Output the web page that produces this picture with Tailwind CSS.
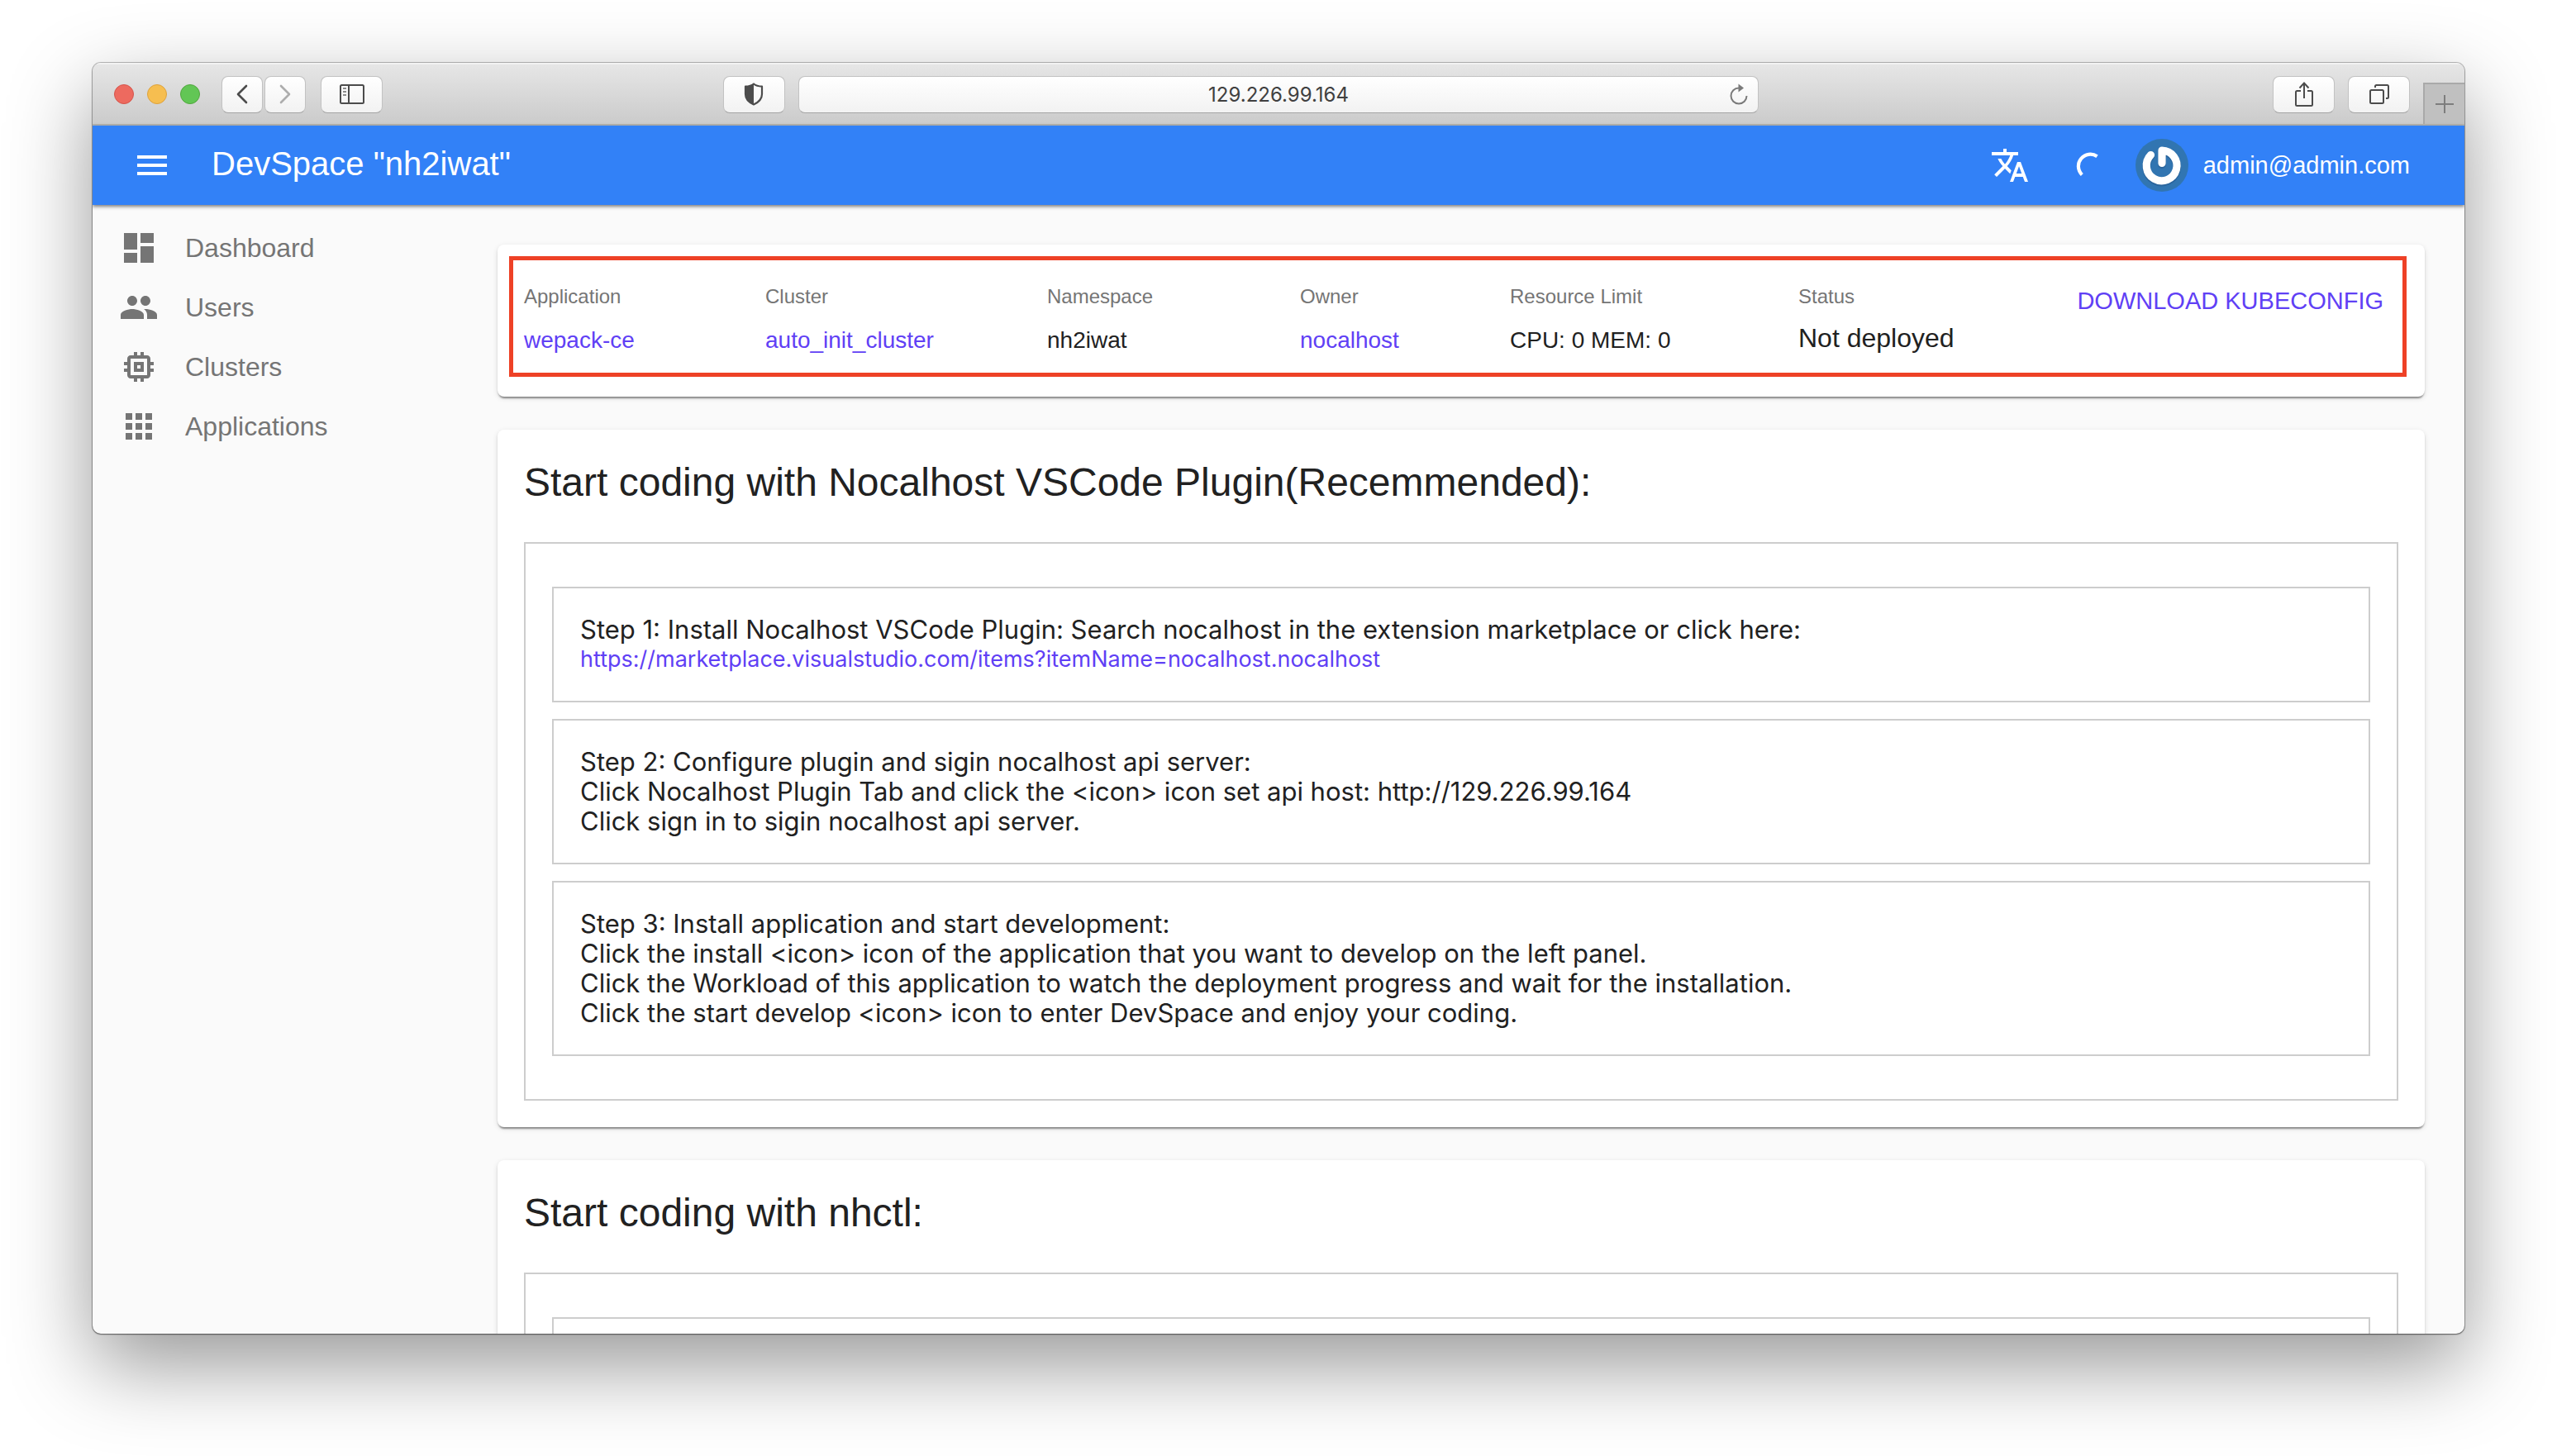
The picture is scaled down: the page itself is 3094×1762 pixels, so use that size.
<!DOCTYPE html>
<html lang="en">
<head>
<meta charset="utf-8">
<meta name="viewport" content="width=device-width, initial-scale=1">
<title>DevSpace "nh2iwat"</title>
<script src="https://cdn.jsdelivr.net/npm/@tailwindcss/browser@4"></script>
</head>
<body class="bg-white font-['Liberation_Sans',Arial,sans-serif] text-[#212121]">
<div class="h-screen px-28 pt-[76px] pb-[148px]">
  <!-- Browser window -->
  <div class="flex h-full flex-col overflow-hidden rounded-[10px] bg-[#fafafa] shadow-[0_0_0_1px_rgba(0,0,0,0.25),0_1px_2px_rgba(0,0,0,0.4),0_38px_100px_rgba(0,0,0,0.41)]">

    <!-- Toolbar -->
    <div class="grid h-[76px] shrink-0 grid-cols-[1fr_40.5%_1fr] items-center border-t-2 border-b-2 border-t-[#f2f2f2] border-b-[#b3b3b0] bg-linear-to-b from-[#e6e6e6] to-[#cbcbcb]">
      <div class="flex items-center pr-4 pl-[26px]">
        <div class="flex gap-4">
          <button aria-label="Close" class="size-6 rounded-full border border-[#d5544b] bg-[#ed6a5f]"></button>
          <button aria-label="Minimize" class="size-6 rounded-full border border-[#dda23d] bg-[#f6be50]"></button>
          <button aria-label="Zoom" class="size-6 rounded-full border border-[#51a73e] bg-[#62c655]"></button>
        </div>
        <div class="ml-[26px] flex gap-0.5">
          <button aria-label="Back" class="flex h-[45px] w-[50px] items-center justify-center rounded-lg border border-[#c2c2c2] border-b-[#a5a5a5] bg-linear-to-b from-white to-[#f2f2f2]">
            <svg class="h-6 w-4" viewBox="0 0 16 24" fill="none" stroke="#4c4c4c" stroke-width="2.6" stroke-linecap="round" stroke-linejoin="round"><path d="M13 2 3 12l10 10"/></svg>
          </button>
          <button aria-label="Forward" class="flex h-[45px] w-[50px] items-center justify-center rounded-lg border border-[#c2c2c2] border-b-[#a5a5a5] bg-linear-to-b from-white to-[#f2f2f2]">
            <svg class="h-6 w-4" viewBox="0 0 16 24" fill="none" stroke="#adadad" stroke-width="2.6" stroke-linecap="round" stroke-linejoin="round"><path d="m3 2 10 10L3 22"/></svg>
          </button>
        </div>
        <button aria-label="Sidebar" class="ml-[18px] flex h-[45px] w-[75px] items-center justify-center rounded-lg border border-[#c2c2c2] border-b-[#a5a5a5] bg-linear-to-b from-white to-[#f2f2f2]">
          <svg class="h-6 w-[30px]" viewBox="0 0 30 24" fill="none" stroke="#4c4c4c" stroke-width="2"><rect x="1" y="1" width="28" height="22" rx="1.5"/><path d="M11 1v22"/><path stroke="#8c8c8c" d="M4 5h4M4 9h4M4 13h4"/></svg>
        </button>
        <button aria-label="Privacy report" class="ml-auto flex h-[45px] w-[75px] items-center justify-center rounded-lg border border-[#c2c2c2] border-b-[#a5a5a5] bg-linear-to-b from-white to-[#f2f2f2]">
          <svg class="h-7 w-6" viewBox="0 0 24 28"><path d="M12 1.500C9.500 3.500 6 4.500 2 4.700V14c0 6 4.500 10 10 12.500C17.500 24 22 20 22 14V4.700C18 4.500 14.500 3.500 12 1.500z" fill="none" stroke="#4c4c4c" stroke-width="2.200" stroke-linejoin="round"/><path d="M12 1.500C9.500 3.500 6 4.500 2 4.700V14c0 6 4.500 10 10 12.500z" fill="#4c4c4c"/></svg>
        </button>
      </div>

      <div class="relative">
        <input aria-label="Address" type="text" value="129.226.99.164" class="block h-[45px] w-full rounded-lg border border-[#c2c2c2] border-b-[#a5a5a5] bg-linear-to-b from-white to-[#f2f2f2] text-center font-['Inter',sans-serif] text-2xl text-[#404040]">
        <button aria-label="Reload" class="absolute top-2 right-2.5">
          <svg class="size-7" viewBox="0 0 28 28" fill="none" stroke="#7a7a7a" stroke-width="2"><path d="M14 6.500A9.500 9.500 0 1 0 23.500 16"/><path d="M13.500 1.500v10l6.500-5z" fill="#7a7a7a" stroke="none"/></svg>
        </button>
      </div>

      <div class="flex items-center justify-end gap-4 self-stretch">
        <button aria-label="Share" class="flex h-[45px] w-[75px] items-center justify-center rounded-lg border border-[#c2c2c2] border-b-[#a5a5a5] bg-linear-to-b from-white to-[#f2f2f2]">
          <svg class="h-8 w-[22px]" viewBox="0 0 22 32" fill="none" stroke="#4c4c4c" stroke-width="2"><path d="M7 12H2.500Q1 12 1 13.500v15Q1 30 2.500 30h17q1.500 0 1.500-1.500v-15Q21 12 19.500 12H15M11 21V3M5.500 8.500 11 2.500l5.500 6"/></svg>
        </button>
        <button aria-label="Tab overview" class="flex h-[45px] w-[75px] items-center justify-center rounded-lg border border-[#c2c2c2] border-b-[#a5a5a5] bg-linear-to-b from-white to-[#f2f2f2]">
          <svg class="size-6" viewBox="0 0 24 24" fill="none" stroke="#4c4c4c" stroke-width="2"><rect x="1" y="7" width="16" height="16" rx="1.500"/><path d="M7 4V2.500Q7 1 8.500 1h13Q23 1 23 2.500v13q0 1.500-1.500 1.500H20"/></svg>
        </button>
        <button aria-label="New tab" class="flex h-[50px] w-[50px] items-center justify-center self-end border-t-2 border-l-2 border-[#a9a9a9] bg-[#c0c0c0]">
          <svg class="size-[22px]" viewBox="0 0 22 22" stroke="#7d7d7d" stroke-width="2"><path d="M11 0v22M0 11h22"/></svg>
        </button>
      </div>
    </div>

    <!-- App bar -->
    <header class="z-10 flex h-24 shrink-0 items-center bg-[#3281f7] px-12 text-white shadow-[0_2px_4px_rgba(0,0,0,0.5)]">
      <button aria-label="Menu"><svg class="size-12" viewBox="0 0 24 24" fill="currentColor"><path d="M3 18h18v-2H3v2zm0-5h18v-2H3v2zm0-7v2h18V6H3z"/></svg></button>
      <h1 class="ml-12 pb-1 text-[40px]/[48px]">DevSpace "nh2iwat"</h1>
      <div class="ml-auto flex items-center pr-[18px]">
        <button aria-label="Language"><svg class="size-12" viewBox="0 0 24 24" fill="currentColor"><path d="M12.870 15.070l-2.540-2.510.03-.03c1.740-1.940 2.980-4.170 3.710-6.530H17V4h-7V2H8v2H1v1.990h11.170C11.500 7.920 10.440 9.750 9 11.350 8.070 10.320 7.300 9.190 6.690 8h-2c.73 1.630 1.730 3.170 2.980 4.560l-5.090 5.020L4 19l5-5 3.110 3.110.76-2.040zM18.500 10h-2L12 22h2l1.120-3h4.750L21 22h2l-4.500-12zm-2.620 7l1.620-4.330L19.120 17h-3.240z"/></svg></button>
        <svg class="ml-14 size-8" viewBox="0 0 32 32" fill="none" stroke="currentColor" stroke-width="4.200" role="img" aria-label="Loading"><path d="M25.500 5.300A14.400 14.400 0 0 0 7.300 27.500"/></svg>
        <a href="#" class="ml-10 flex items-center gap-[18px] text-[29px]/[40px]">
          <svg class="size-16" viewBox="-32 -32 64 64" fill="none" stroke-linecap="round" stroke-linejoin="round"><circle r="32" fill="#3175b1"/><path d="M0-2.500V-18A18.400 18.400 0 1 1-13.500-12.500" transform="translate(0 1.500)" stroke="#23568a" stroke-opacity=".5" stroke-width="10"/><path d="M0-2.500V-18A18.400 18.400 0 1 1-13.500-12.500" stroke="#fff" stroke-width="9.200"/></svg>
          admin@admin.com
        </a>
      </div>
    </header>

    <div class="flex min-h-0 flex-1">
      <!-- Navigation -->
      <nav class="w-[442px] shrink-0 pt-4 text-[32px]/[40px] text-[#757575]">
        <a href="#" class="flex h-18 items-center gap-8 px-8"><svg class="size-12" viewBox="0 0 24 24" fill="currentColor"><path d="M3 13h8V3H3v10zm0 8h8v-6H3v6zm10 0h8V11h-8v10zm0-18v6h8V3h-8z"/></svg>Dashboard</a>
        <a href="#" class="flex h-18 items-center gap-8 px-8"><svg class="size-12" viewBox="0 0 24 24" fill="currentColor"><path d="M16 11c1.660 0 2.990-1.340 2.990-3S17.660 5 16 5c-1.660 0-3 1.340-3 3s1.340 3 3 3zm-8 0c1.660 0 2.990-1.340 2.990-3S9.660 5 8 5C6.340 5 5 6.340 5 8s1.340 3 3 3zm0 2c-2.330 0-7 1.170-7 3.500V19h14v-2.500c0-2.330-4.670-3.500-7-3.500zm8 0c-.29 0-.62.02-.97.05 1.160.84 1.970 1.970 1.970 3.450V19h6v-2.500c0-2.330-4.670-3.500-7-3.500z"/></svg>Users</a>
        <a href="#" class="flex h-18 items-center gap-8 px-8"><svg class="size-12" viewBox="0 0 24 24" fill="currentColor"><path d="M15 9H9v6h6V9zm-2 4h-2v-2h2v2zm8-2V9h-2V7c0-1.100-.9-2-2-2h-2V3h-2v2h-2V3H9v2H7c-1.100 0-2 .9-2 2v2H3v2h2v2H3v2h2v2c0 1.100.9 2 2 2h2v2h2v-2h2v2h2v-2h2c1.100 0 2-.9 2-2v-2h2v-2h-2v-2h2zm-4 6H7V7h10v10z"/></svg>Clusters</a>
        <a href="#" class="flex h-18 items-center gap-8 px-8"><svg class="size-12" viewBox="0 0 24 24" fill="currentColor"><path d="M4 8h4V4H4v4zm6 12h4v-4h-4v4zm-6 0h4v-4H4v4zm0-6h4v-4H4v4zm6 0h4v-4h-4v4zm6-10v4h4V4h-4zm-6 4h4V4h-4v4zm6 6h4v-4h-4v4zm0 6h4v-4h-4v4z"/></svg>Applications</a>
      </nav>

      <!-- Content -->
      <main class="flex min-w-0 flex-1 flex-col gap-10 overflow-hidden p-12">
        <section class="relative shrink-0 rounded-lg bg-white px-8 py-12 shadow-[0_4px_2px_-2px_rgba(0,0,0,0.3),0_2px_2px_rgba(0,0,0,0.14),0_2px_6px_rgba(0,0,0,0.12)]">
          <dl class="grid grid-cols-[292fr_341fr_306fr_254fr_349fr_337fr_389fr] text-[28px]/[40px]">
            <div><dt class="mb-[18px] text-2xl/[30px] text-[#757575]">Application</dt><dd><a href="#" class="text-[#6040f5]">wepack-ce</a></dd></div>
            <div><dt class="mb-[18px] text-2xl/[30px] text-[#757575]">Cluster</dt><dd><a href="#" class="text-[#6040f5]">auto_init_cluster</a></dd></div>
            <div><dt class="mb-[18px] text-2xl/[30px] text-[#757575]">Namespace</dt><dd>nh2iwat</dd></div>
            <div><dt class="mb-[18px] text-2xl/[30px] text-[#757575]">Owner</dt><dd><a href="#" class="text-[#6040f5]">nocalhost</a></dd></div>
            <div><dt class="mb-[18px] text-2xl/[30px] text-[#757575]">Resource Limit</dt><dd>CPU: 0 MEM: 0</dd></div>
            <div><dt class="mb-[18px] text-2xl/[30px] text-[#757575]">Status</dt><dd class="text-[32px]/[34px]">Not deployed</dd></div>
            <div class="flex items-start justify-end pr-[18px]"><button class="text-[29px]/[40px] whitespace-nowrap text-[#6040f5]">DOWNLOAD KUBECONFIG</button></div>
          </dl>
          <!-- Highlight over the summary -->
          <div class="pointer-events-none absolute top-3.5 right-[22px] bottom-6 left-3.5 border-5 border-[#ee4126]"></div>
        </section>

        <section class="shrink-0 rounded-lg bg-white p-8 shadow-[0_4px_2px_-2px_rgba(0,0,0,0.3),0_2px_2px_rgba(0,0,0,0.14),0_2px_6px_rgba(0,0,0,0.12)]">
          <h2 class="mb-10 text-5xl/[64px]">Start coding with Nocalhost VSCode Plugin(Recemmended):</h2>
          <div class="flex flex-col gap-5 border-2 border-[#cdcdcd] px-8 py-[52px] font-['Inter',sans-serif] text-[31px]/[36px]">
            <div class="border-2 border-[#cdcdcd] p-8">
              <p>Step 1: Install Nocalhost VSCode Plugin: Search nocalhost in the extension marketplace or click here:</p>
              <p class="text-[27px]/[36px]"><a href="#" class="text-[#6040f5]">https://marketplace.visualstudio.com/items?itemName=nocalhost.nocalhost</a></p>
            </div>
            <div class="border-2 border-[#cdcdcd] p-8">
              <p>Step 2: Configure plugin and sigin nocalhost api server:</p>
              <p>Click Nocalhost Plugin Tab and click the &lt;icon&gt; icon set api host: http://129.226.99.164</p>
              <p>Click sign in to sigin nocalhost api server.</p>
            </div>
            <div class="border-2 border-[#cdcdcd] p-8">
              <p>Step 3: Install application and start development:</p>
              <p>Click the install &lt;icon&gt; icon of the application that you want to develop on the left panel.</p>
              <p>Click the Workload of this application to watch the deployment progress and wait for the installation.</p>
              <p>Click the start develop &lt;icon&gt; icon to enter DevSpace and enjoy your coding.</p>
            </div>
          </div>
        </section>

        <section class="shrink-0 rounded-lg bg-white p-8 shadow-[0_4px_2px_-2px_rgba(0,0,0,0.3),0_2px_2px_rgba(0,0,0,0.14),0_2px_6px_rgba(0,0,0,0.12)]">
          <h2 class="mb-10 text-5xl/[64px]">Start coding with nhctl:</h2>
          <div class="border-2 border-[#cdcdcd] px-8 py-[52px]">
            <div class="h-36 border-2 border-[#cdcdcd]"></div>
          </div>
        </section>
      </main>
    </div>
  </div>
</div>
</body>
</html>
